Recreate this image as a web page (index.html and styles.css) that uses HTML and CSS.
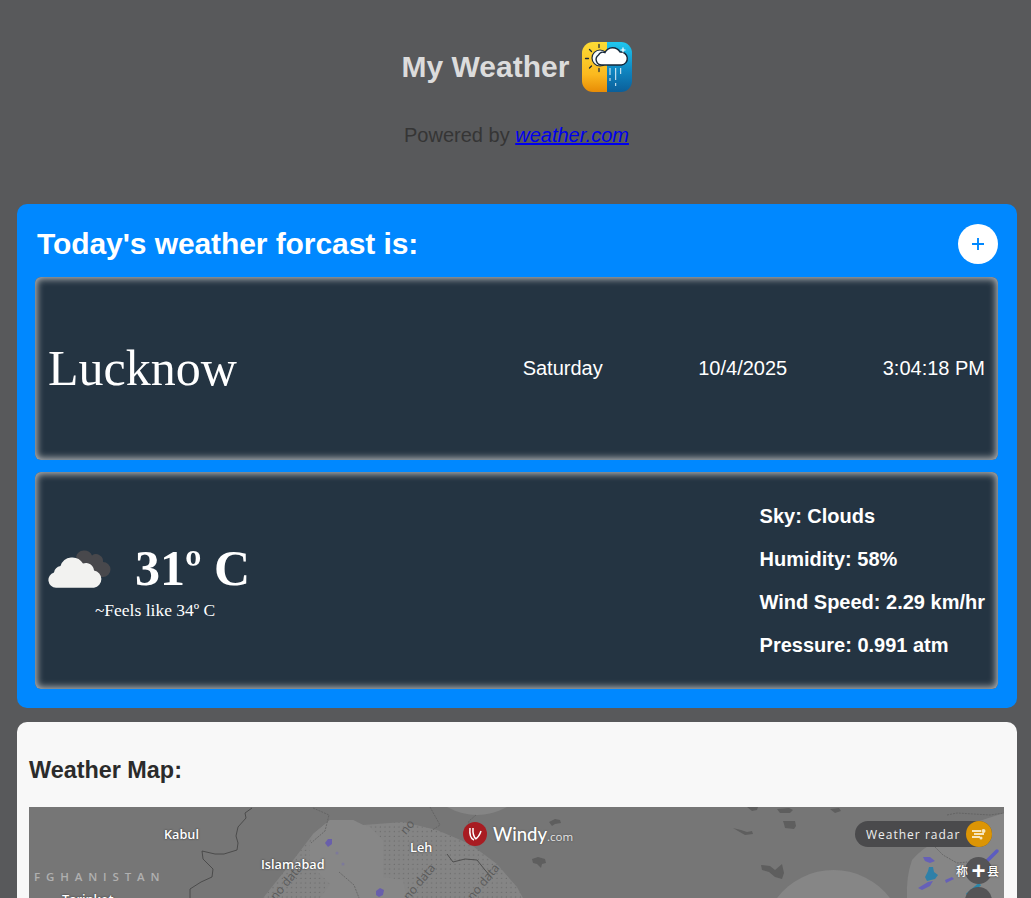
FILE: index.html
```html
<!DOCTYPE html>
<html lang="en">
<head>
<meta charset="utf-8">
<title>My Weather</title>
<link rel="stylesheet" href="styles.css">
</head>
<body>
<header class="site-header">
  <div class="brand">
    <h1 class="brand-title">My Weather</h1>
    <svg class="brand-icon" viewBox="0 0 50 50" width="50" height="50" aria-hidden="true">
      <defs>
        <linearGradient id="sunbg" x1="0" y1="0" x2="0" y2="1"><stop offset="0" stop-color="#fddc35"/><stop offset="0.65" stop-color="#fbb91f"/><stop offset="1" stop-color="#e88c05"/></linearGradient>
        <linearGradient id="rainbg" x1="0" y1="0" x2="0" y2="1"><stop offset="0" stop-color="#1fc8f0"/><stop offset="0.55" stop-color="#0f87c2"/><stop offset="1" stop-color="#0b5f9a"/></linearGradient>
        <clipPath id="rbox"><rect width="50" height="50" rx="11"/></clipPath>
      </defs>
      <g clip-path="url(#rbox)">
        <rect width="25" height="50" fill="url(#sunbg)"/>
        <rect x="25" width="25" height="50" fill="url(#rainbg)"/>
      </g>
      <path d="M17 2.500v3M7.500 7.500l2 2M3.500 16.500h3M7.500 26l2-2M17 26.500v3" stroke="#1c2b3a" stroke-width="1.300" stroke-linecap="round" fill="none"/>
      <circle cx="18" cy="16" r="8" fill="#f4fafd" stroke="#1c2b3a" stroke-width="1.200"/>
      <path d="M20 23a5.500 5.500 0 0 1-3.500-10a5 5 0 0 1 6.500-2.500a8.500 8.500 0 0 1 15-.5a6.500 6.500 0 0 1 1.500 13z" fill="#fff" stroke="#16283a" stroke-width="1.400"/>
      <path d="M41 5.500v5M38.500 8h5" stroke="#fff" stroke-width="1.200"/>
      <path d="M28 26v7M28 36v3M33.700 26v12M33.700 41v3M38.700 26v6" stroke="#fff" stroke-width="0.900"/>
    </svg>
  </div>
  <p class="powered">Powered by <a class="powered-link" href="#">weather.com</a></p>
</header>

<main class="page">
  <section class="forecast">
    <div class="forecast-head">
      <h2 class="forecast-title">Today's weather forcast is:</h2>
      <button class="add-btn" type="button" aria-label="Add">
        <svg viewBox="0 0 14 14" width="14" height="14" aria-hidden="true"><path d="M7 1v12M1 7h12" stroke="#0088ff" stroke-width="1.900"/></svg>
      </button>
    </div>
    <div class="panel panel-place">
      <div class="city">Lucknow</div>
      <div class="when">
        <span>Saturday</span>
        <span>10/4/2025</span>
        <span>3:04:18 PM</span>
      </div>
    </div>
    <div class="panel panel-now">
      <div class="now">
        <div class="now-main">
          <svg class="now-icon" viewBox="0 0 64 40" width="64" height="40" aria-hidden="true">
            <path d="M28 8A8.500 8.500 0 0 1 44 6.500A7 7 0 0 1 55 13A7.500 7.500 0 0 1 55 28H45Z" fill="#48484c"/>
            <path d="M8 38.700A7.700 7.700 0 0 1 6 23.600A8 8 0 0 1 12.500 17A12.500 12.500 0 0 1 35 14.500A8 8 0 0 1 46 21.500A8.700 8.700 0 0 1 46 38.700Z" fill="#f2f2f0"/>
          </svg>
          <div class="temp">31º C</div>
        </div>
        <div class="feels">~Feels like 34º C</div>
      </div>
      <ul class="stats">
        <li>Sky: Clouds</li>
        <li>Humidity: 58%</li>
        <li>Wind Speed: 2.29 km/hr</li>
        <li>Pressure: 0.991 atm</li>
      </ul>
    </div>
  </section>

  <section class="map-card">
    <h2 class="map-title">Weather Map:</h2>
    <div class="map">
      <svg class="map-art" viewBox="0 0 975 91" width="975" height="91" aria-hidden="true">
        <defs>
          <pattern id="dots" width="4.667" height="4.667" patternUnits="userSpaceOnUse"><circle cx="1.200" cy="1.200" r="0.500" fill="#555"/></pattern>
        </defs>
        <path d="M234 91L262 56L284 27L301 13L324 13L334 18L374 15L408 23L441 37L468 57L488 80L494 91z" fill="#858585"/>
        <path d="M234 91L262 56L284 27L301 13L324 13L334 18L374 15L408 23L441 37L468 57L488 80L494 91z" fill="url(#dots)"/>
        <path d="M281 37L284 27L301 13L324 13L334 18L341 20L354 33L354 70L374 73L378 91L291 91L301 77L281 57z" fill="#878787"/>
        <path d="M418 0Q448 16 478 0z" fill="#858585"/>
        <path d="M748 91A71 71 0 0 1 861 91z" fill="#868686"/>
        <path d="M878 91Q877 70 883 53Q894 40 911 33Q926 22 944 16L975 6V91z" fill="#868686"/>
        <g fill="none" stroke="#404040" stroke-width="0.800">
          <path d="M223 1L216 6L217 11L209 20L207 29L209 36L208 43L195 47L186 47L173 44L174 52L184 62L183 70L172 75L161 82L161 91"/>
          <path d="M418 47L424 55L436 52L448 53L456 63L462 70"/>
        </g>
        <g fill="none" stroke="#5c5c5c" stroke-width="0.700" stroke-dasharray="2 1">
          <path d="M284 1L300 8L296 24L282 36"/>
          <path d="M401 0L411 18L402 24"/>
          <path d="M447 8L440 14L437 30"/>
          <path d="M904 38L914 48L928 56L938 55"/>
          <path d="M918 8L928 6L961 8L975 6"/>
          <path d="M310 65L325 78L330 91"/>
        </g>
        <g fill="#5e5e5e">
          <path d="M520 15l6-3 5 1 1 3-6 1-3 2z"/>
          <path d="M503 52l6-2 7 2 1 4-4 1-1 4-4-4-4-1z"/>
          <path d="M718 0l11 0-1 3-5 1z"/>
          <path d="M748 2l12-1 4 2-3 3-10 0z"/>
          <path d="M754 14l12 0 1 5-2 3-9-1-1-4z"/>
          <path d="M801 2l9-1 2 3-6 2z"/>
          <path d="M704 21l8 2 6 2 5-1 1 3-8 1-7-4z"/>
          <path d="M732 58l9 1 5 4 7-6 2 9-2 6-7-2-6-5-7-2z"/>
        </g>
        <g fill="#5f52b8" opacity="0.750">
          <path d="M296 36l3-4 4 0 0 5-4 3z"/>
          <path d="M347 84l4-3 4 2-1 5-4 2-3-2z"/>
        </g>
        <g fill="#7872a8" opacity="0.600">
          <circle cx="308" cy="46" r="1.500"/>
          <circle cx="314" cy="57" r="1.500"/>
        </g>
        <g>
          <path d="M894 50l7 0 5 4-5 2-5-2zM889 81l10-6 5-1-3 5-8 4zM916 73l7-3 2 2-8 4z" fill="#6660b8"/>
          <path d="M896 70l3-6 1-4 4 0 1 5 4 3-3 4-8 2z" fill="#2f80a8"/>
          <path d="M968 44L958 54" stroke="#5c5cc0" stroke-width="3.500" stroke-linecap="round"/>
          <path d="M951 77L938 88" stroke="#2a86a8" stroke-width="3.500"/>
        </g>
      </svg>

      <span class="label city-label kabul">Kabul</span>
      <span class="label city-label islamabad">Islamabad</span>
      <span class="label city-label leh">Leh</span>
      <span class="label city-label tirinkot">Tarinkot</span>
      <span class="label country">F G H A N I S T A N</span>
      <span class="nodata nd1">no data</span>
      <span class="nodata nd2">no data</span>
      <span class="nodata nd3">no data</span>
      <span class="nodata nd4">no</span>

      <div class="windy">
        <svg class="windy-mark" viewBox="0 0 24 24" width="24" height="24" aria-hidden="true">
          <circle cx="12" cy="12" r="12" fill="#a81c22"/>
          <path d="M7 6Q6 16 11 18M10 6Q9.500 14 13 17M12.500 17Q16 15 18 9" fill="none" stroke="#fff" stroke-width="1.500"/>
        </svg>
        <span class="windy-name">Windy</span><span class="windy-com">.com</span>
      </div>

      <div class="radar">
        <span class="radar-text">Weather radar</span>
        <span class="radar-icon">
          <svg viewBox="0 0 16 12" width="16" height="12" aria-hidden="true"><path d="M1 3h9M3 6h10M1 9h8" fill="none" stroke="#f7e7be" stroke-width="2"/><circle cx="12.500" cy="3" r="2" fill="#f7e7be"/><circle cx="10" cy="10" r="1.500" fill="#f7e7be"/></svg>
        </span>
      </div>

      <span class="zoom-btn zoom-in">+</span>
      <span class="zoom-btn zoom-out"></span>
      <span class="label cjk cjk-left">称</span>
      <span class="label cjk cjk-right">县</span>
    </div>
  </section>
</main>
</body>
</html>
```

FILE: styles.css
```css
* {
  box-sizing: border-box;
}

html,
body {
  height: 898px;
  overflow: hidden;
}

body {
  margin: 0;
  background: #58595b;
  font-family: "Liberation Sans", Arial, sans-serif;
}

.site-header {
  height: 204px;
  padding-top: 42px;
  text-align: center;
}

.brand {
  display: flex;
  justify-content: center;
  align-items: center;
  gap: 13px;
  padding-left: 3px;
}

.brand-title {
  margin: 0;
  font-size: 30px;
  font-weight: 700;
  line-height: 50px;
  color: #dcdcdc;
}

.brand-icon {
  display: block;
}

.powered {
  margin: 32px 0 0;
  padding-left: 2px;
  font-size: 20px;
  line-height: 23px;
  color: #353535;
}

.powered-link {
  color: #0000ee;
  font-style: italic;
}

.page {
  display: flex;
  flex-direction: column;
  gap: 14px;
  width: 1000px;
  margin-left: 17px;
}

.forecast {
  height: 504px;
  padding: 20px 19px 19px 18px;
  border-radius: 10px;
  background: #0088ff;
}

.forecast-head {
  display: flex;
  justify-content: space-between;
  align-items: center;
  height: 40px;
  padding-left: 2px;
  margin-bottom: 13px;
}

.forecast-title {
  margin: 0;
  font-size: 30px;
  font-weight: 700;
  letter-spacing: -0.080px;
  color: #fff;
}

.add-btn {
  display: flex;
  justify-content: center;
  align-items: center;
  width: 40px;
  height: 40px;
  padding: 0;
  border: 0;
  border-radius: 50%;
  background: #fff;
}

.panel {
  display: flex;
  justify-content: space-between;
  align-items: center;
  padding: 0 13px;
  border-radius: 6px;
  background: #243442;
  box-shadow: inset 0 0 7px 2px #b4b6b8;
  color: #fff;
}

.panel-place {
  height: 183px;
  margin-bottom: 12px;
}

.panel-now {
  height: 217px;
}

.city {
  margin-top: -2px;
  font-family: "Liberation Serif", "Times New Roman", serif;
  font-size: 50px;
}

.when {
  display: flex;
  gap: 95.500px;
  font-size: 20px;
}

.now {
  display: flex;
  flex-direction: column;
  align-items: center;
  margin-top: -1px;
  font-family: "Liberation Serif", "Times New Roman", serif;
}

.now-main {
  display: flex;
  align-items: center;
  gap: 23px;
}

.now-icon {
  display: block;
}

.temp {
  font-size: 50px;
  font-weight: 700;
  line-height: 57px;
}

.feels {
  padding-left: 12px;
  font-size: 17.500px;
  line-height: 20px;
  margin-top: 3px;
}

.stats {
  display: flex;
  flex-direction: column;
  gap: 20px;
  margin: 0;
  padding: 0;
  list-style: none;
  font-size: 20px;
  font-weight: 700;
  line-height: 23px;
}

.map-card {
  padding: 34px 13px 0 12px;
  height: 400px;
  border-radius: 10px;
  background: #f8f8f8;
}

.map-title {
  margin: 0 0 23px;
  font-size: 23.400px;
  line-height: 28px;
  font-weight: 700;
  color: #2b2b2b;
}

.map {
  position: relative;
  height: 300px;
  overflow: hidden;
  background: #767676;
}

.map-art {
  position: absolute;
  left: 0;
  top: 0;
}

.label {
  position: absolute;
  font-family: "Open Sans", "Noto Sans", sans-serif;
  white-space: nowrap;
}

.city-label {
  font-size: 12.700px;
  font-weight: 600;
  line-height: 16px;
  color: #fff;
  text-shadow: 0 0 2px #222;
}

.kabul {
  left: 135px;
  top: 19px;
}

.islamabad {
  left: 232px;
  top: 49px;
}

.leh {
  left: 381px;
  top: 32px;
}

.tirinkot {
  left: 33px;
  top: 84px;
}

.country {
  left: 5px;
  top: 63px;
  font-size: 11.500px;
  font-weight: 600;
  line-height: 14px;
  letter-spacing: 1.440px;
  color: #b0b0b0;
}

.nodata {
  position: absolute;
  font-family: "Open Sans", "Noto Sans", sans-serif;
  font-size: 12px;
  line-height: 14px;
  color: #5a5a5a;
  transform: rotate(-50deg);
  white-space: nowrap;
}

.nd1 {
  left: 236px;
  top: 68px;
}

.nd2 {
  left: 369px;
  top: 68px;
}

.nd3 {
  left: 433px;
  top: 68px;
}

.nd4 {
  left: 371px;
  top: 13px;
}

.windy {
  position: absolute;
  left: 434px;
  top: 14px;
  display: flex;
  align-items: baseline;
  height: 26px;
  font-family: Lato, "Open Sans", sans-serif;
  color: #fff;
  text-shadow: 0 0 2px #444;
}

.windy-mark {
  align-self: center;
  margin-right: 6px;
}

.windy-name {
  font-size: 18.500px;
  font-weight: 500;
  line-height: 26px;
}

.windy-com {
  font-family: "Open Sans", "Noto Sans", sans-serif;
  font-size: 11.500px;
  color: #e6e6e6;
}

.radar {
  position: absolute;
  right: 12px;
  top: 14px;
  display: flex;
  align-items: center;
  justify-content: space-between;
  width: 137px;
  height: 26px;
  padding-left: 11px;
  border-radius: 13px;
  background: #4a4a4c;
  color: #eee;
  font-family: "Open Sans", "Noto Sans", sans-serif;
  font-size: 12px;
  font-weight: 500;
  letter-spacing: 1px;
}

.radar-icon {
  display: flex;
  justify-content: center;
  align-items: center;
  width: 26px;
  height: 26px;
  border-radius: 50%;
  background: #dc9505;
}

.zoom-btn {
  position: absolute;
  left: 936px;
  display: flex;
  justify-content: center;
  align-items: center;
  width: 27px;
  height: 27px;
  border-radius: 50%;
  background: #545456;
  color: #fff;
  font-family: "Liberation Sans", Arial, sans-serif;
  font-size: 24px;
  font-weight: 700;
}

.zoom-in {
  top: 50px;
}

.zoom-out {
  top: 80px;
}

.cjk {
  font-family: "Noto Sans CJK SC", sans-serif;
  font-size: 12px;
  line-height: 16px;
  font-weight: 500;
  color: #fff;
  text-shadow: 0 0 2px #333;
}

.cjk-left {
  left: 927px;
  top: 56px;
}

.cjk-right {
  left: 958px;
  top: 56px;
}
```
